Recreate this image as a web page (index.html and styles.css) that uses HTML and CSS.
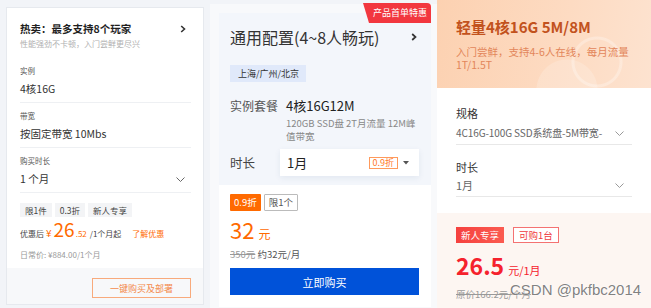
FILE: index.html
```html
<!DOCTYPE html>
<html lang="zh">
<head>
<meta charset="utf-8">
<link rel="stylesheet" href="styles.css">
</head>
<body>
  <div class="card1">
    <div class="c1-body">
      <div class="c1-head">
        <span class="c1-title">热卖：最多支持8个玩家</span>
        <svg class="c1-arrow" width="6" height="8" viewBox="0 0 6 8"><path d="M1.2 1l3.3 3-3.3 3" fill="none" stroke="#333" stroke-width="1.6"/></svg>
      </div>
      <div class="c1-sub">性能强劲不卡顿，入门尝鲜更尽兴</div>
      <div class="field first">
        <div class="f-label">实例</div>
        <div class="f-value">4核16G</div>
      </div>
      <div class="field">
        <div class="f-label">带宽</div>
        <div class="f-value">按固定带宽 10Mbs</div>
      </div>
      <div class="field">
        <div class="f-label">购买时长</div>
        <div class="f-value"><span>1 个月</span><svg class="c1-down" width="9" height="5" viewBox="0 0 9 5"><path d="M0.5 0.5l4 4 4-4" fill="none" stroke="#666" stroke-width="1"/></svg></div>
      </div>
      <div class="c1-tags">
        <span class="c1-tag">限1件</span>
        <span class="c1-tag">0.3折</span>
        <span class="c1-tag">新人专享</span>
      </div>
      <div class="c1-price">
        <span>优惠后</span><span class="yen">¥</span><span class="big">26</span><span class="dec">.52</span><span>/1个月起</span><span class="link">了解优惠</span>
      </div>
      <div class="c1-daily">日常价: ¥884.00/1个月</div>
    </div>
    <div class="c1-foot">
      <div class="c1-btn">一键购买及部署</div>
    </div>
  </div>

  <div class="card2">
    <div class="c2-badge">产品首单特惠</div>
    <div class="c2-top">
      <div class="c2-head">
        <span class="c2-title">通用配置(4~8人畅玩)</span>
        <svg class="c2-arrow" width="6" height="8" viewBox="0 0 6 8"><path d="M1.2 1l3.3 3-3.3 3" fill="none" stroke="#333" stroke-width="1.7"/></svg>
      </div>
      <div class="c2-region">上海/广州/北京</div>
      <div class="c2-row">
        <span class="c2-lbl">实例套餐</span>
        <span class="c2-val">4核16G12M</span>
      </div>
      <div class="c2-spec">120GB SSD盘 2T月流量 12M峰值带宽</div>
      <div class="c2-selrow">
        <span class="c2-lbl2">时长</span>
        <div class="c2-select">
          <span class="c2-selval">1月</span>
          <span class="c2-disc">0.9折</span>
          <svg class="c2-caret" width="6" height="4" viewBox="0 0 6 4"><path d="M0 0h6L3 3.5z" fill="#555"/></svg>
        </div>
      </div>
    </div>
    <div class="c2-bot">
      <div class="c2-tags">
        <span class="c2-tag-fill">0.9折</span>
        <span class="c2-tag-line">限1个</span>
      </div>
      <div class="c2-price">32<small>元</small></div>
      <div class="c2-orig"><s>350元</s> 约32元/月</div>
      <div class="c2-btn">立即购买</div>
    </div>
  </div>

  <div class="card3">
    <div class="c3-head">
      <div class="c3-title">轻量4核16G 5M/8M</div>
      <div class="c3-sub">入门尝鲜，支持4-6人在线，每月流量1T/1.5T</div>
    </div>
    <div class="c3-mid">
      <div class="c3-lbl">规格</div>
      <div class="c3-sel"><span class="c3-selval">4C16G-100G SSD系统盘-5M带宽-</span><svg class="c3-down" width="9" height="5" viewBox="0 0 9 5"><path d="M0.5 0.5l4 4 4-4" fill="none" stroke="#999" stroke-width="1"/></svg></div>
      <div class="c3-lbl c3-lbl2">时长</div>
      <div class="c3-sel c3-sel2"><span>1月</span><svg class="c3-down" width="9" height="5" viewBox="0 0 9 5"><path d="M0.5 0.5l4 4 4-4" fill="none" stroke="#999" stroke-width="1"/></svg></div>
    </div>
    <div class="c3-bot">
      <div class="c3-tags">
        <span class="c3-tag-fill">新人专享</span>
        <span class="c3-tag-line">可购1台</span>
      </div>
      <div class="c3-price"><span class="c3-big">26.5</span><span class="c3-unit">元/1月</span></div>
      <div class="c3-orig"><s>原价166.2元/个月</s></div>
    </div>
    <div class="watermark">CSDN @pkfbc2014</div>
  </div>
</body>
</html>
```
FILE: styles.css
```css
* { box-sizing: border-box; margin: 0; padding: 0; }
body {
  width: 651px;
  height: 308px;
  overflow: hidden;
  background: #f2f4f8;
  font-family: "Noto Sans CJK SC", "Noto Sans", sans-serif;
  color: #333;
  display: flex;
  align-items: flex-start;
}

/* ---------- card 1 ---------- */
.card1 {
  margin: 7px 0 0 6px;
  width: 198px;
  border: 1px solid #e6e9ee;
  background: #fff;
  display: flex;
  flex-direction: column;
  flex-shrink: 0;
}
.c1-body { padding: 12px 12px 7px 13px; }
.c1-head {
  display: flex;
  justify-content: space-between;
  align-items: center;
  height: 18px;
}
.c1-title { font-size: 10.5px; font-weight: 700; line-height: 18px; color: #1f1f1f; }
.c1-arrow { margin-right: 5px; }
.c1-sub { font-size: 8px; line-height: 12px; color: #b0b0b0; }
.field { padding: 6px 0 4px; border-bottom: 1px solid #eef0f3; }
.field.first { margin-top: 8px; }
.f-label { font-size: 7.5px; line-height: 14px; color: #555; }
.f-value {
  margin-top: 2px;
  font-size: 10.5px;
  line-height: 18px;
  color: #333;
  display: flex;
  justify-content: space-between;
  align-items: center;
}
.c1-down { margin-right: 6px; }
.c1-tags { display: flex; gap: 3px; margin-top: 10px; }
.c1-tag {
  height: 14px;
  line-height: 14px;
  padding: 0 5px;
  background: #f3f4f6;
  font-size: 8.5px;
  color: #444;
}
.c1-price {
  margin-top: 2px;
  display: flex;
  align-items: baseline;
  font-size: 8px;
  line-height: 20px;
  color: #444;
}
.c1-price .yen { color: #ff6a00; font-size: 10px; margin: 0 2px 0 2px; }
.c1-price .big { color: #ff6a00; font-size: 19px; }
.c1-price .dec { color: #ff6a00; font-size: 8px; margin: 0 3px 0 1px; }
.c1-price .link { color: #ff6a00; margin-left: 11px; }
.c1-daily { margin-top: 5px; font-size: 8px; line-height: 12px; color: #999; }
.c1-foot {
  background: #f7f8fa;
  padding: 10px 12px 6px;
  display: flex;
  justify-content: flex-end;
}
.c1-btn {
  width: 99px;
  height: 20px;
  border: 1px solid #f8aa7c;
  color: #f48a4c;
  font-size: 9px;
  display: flex;
  align-items: center;
  justify-content: center;
}

/* ---------- card 2 ---------- */
.card2 {
  position: relative;
  margin: 13px 0 0 15px;
  width: 212px;
  flex-shrink: 0;
  background: #fff;
  box-shadow: 0 0 0 9px #f8f9fb;
}
.c2-badge {
  position: absolute;
  top: -10px;
  right: 0;
  width: 68px;
  height: 20px;
  padding-left: 10px;
  background: #f2373f;
  color: #fff;
  font-size: 9px;
  line-height: 20px;
  border-top-right-radius: 4px;
  clip-path: polygon(0 0, 100% 0, 100% 100%, 6px 100%);
}
.c2-top { background: #f3f6fb; padding: 13px 12px 9px 11px; }
.c2-head {
  display: flex;
  justify-content: space-between;
  align-items: center;
  height: 22px;
}
.c2-title { font-size: 16px; line-height: 22px; color: #333; }
.c2-arrow { margin-right: 2px; }
.c2-region {
  margin-top: 17px;
  width: fit-content;
  height: 17px;
  line-height: 17px;
  padding: 0 7px 0 8px;
  background: #e0e9fa;
  font-size: 9px;
  color: #333;
}
.c2-row { display: flex; margin-top: 15px; }
.c2-lbl { width: 56px; font-size: 12px; line-height: 18px; color: #555; }
.c2-val { font-size: 13px; line-height: 18px; color: #222; }
.c2-spec {
  margin: 2px 0 0 56px;
  width: 133px;
  font-size: 9.5px;
  line-height: 13px;
  color: #888;
}
.c2-selrow { display: flex; align-items: center; margin-top: 6px; }
.c2-lbl2 { width: 50px; font-size: 12.5px; color: #444; }
.c2-select {
  width: 139px;
  height: 27px;
  background: #fff;
  box-shadow: 0 2px 6px rgba(30, 60, 120, 0.08);
  display: flex;
  align-items: center;
  padding: 0 10px 0 7px;
}
.c2-selval { font-size: 13px; color: #222; }
.c2-disc {
  margin-left: auto;
  height: 12px;
  line-height: 10px;
  padding: 0 3px;
  border: 1px solid #ff9a5c;
  color: #ff7a2a;
  font-size: 9px;
}
.c2-caret { margin-left: 5px; }
.c2-bot { padding: 9px 12px 12px 11px; }
.c2-tags { display: flex; gap: 3px; }
.c2-tag-fill {
  height: 17px;
  line-height: 17px;
  padding: 0 4px;
  background: #ff6a00;
  color: #fff;
  font-size: 9.5px;
  border-radius: 1px;
}
.c2-tag-line {
  height: 17px;
  line-height: 15px;
  padding: 0 4px;
  border: 1px solid #bbb;
  border-radius: 1px;
  color: #555;
  font-size: 9.5px;
}
.c2-price { margin-top: 5px; font-size: 22px; line-height: 26px; color: #ff6a00; }
.c2-price small { font-size: 12px; margin-left: 4px; }
.c2-orig { font-size: 9.5px; line-height: 14px; color: #555; }
.c2-orig s { color: #999; }
.c2-btn {
  margin-top: 7px;
  height: 27px;
  background: #0052d9;
  color: #fff;
  font-size: 11px;
  display: flex;
  align-items: center;
  justify-content: center;
}

/* ---------- card 3 ---------- */
.card3 {
  position: relative;
  margin-left: 6px;
  width: 230px;
  height: 308px;
  flex-shrink: 0;
  background: #fff;
  display: flex;
  flex-direction: column;
}
.c3-head {
  height: 88px;
  padding: 16px 19px 0;
  background:
    radial-gradient(circle at 160px 62px, transparent 22px, rgba(255,255,255,0.28) 23px, rgba(255,255,255,0.28) 25px, transparent 26px),
    radial-gradient(circle at 130px 90px, rgba(255,255,255,0.18) 0, rgba(255,255,255,0.18) 30px, transparent 31px),
    linear-gradient(100deg, #fcd1b1 0%, #fddbc2 55%, #fde4d2 100%);
}
.c3-title { font-size: 15px; font-weight: 700; line-height: 22px; color: #c2521d; }
.c3-sub {
  margin-top: 8px;
  width: 180px;
  font-size: 10.5px;
  line-height: 12.5px;
  color: #e3865a;
}
.c3-mid { padding: 16px 19px 16px; }
.c3-lbl { font-size: 11px; line-height: 18px; color: #333; }
.c3-lbl2 { margin-top: 13px; }
.c3-sel {
  width: 176px;
  margin-top: 3px;
  padding-bottom: 3px;
  border-bottom: 1px solid #e8e8e8;
  display: flex;
  justify-content: space-between;
  align-items: center;
  font-size: 11px;
  line-height: 16px;
  color: #666;
}
.c3-sel2 { margin-top: 1px; }
.c3-selval { white-space: nowrap; font-size: 10px; letter-spacing: -0.1px; }
.c3-down { margin-right: 8px; flex-shrink: 0; }
.c3-bot { flex: 1; background: #fdf6f2; padding: 14px 19px 0; }
.c3-tags { display: flex; gap: 9px; }
.c3-tag-fill {
  height: 16px;
  line-height: 16px;
  padding: 0 5px;
  background: linear-gradient(90deg, #f5413f, #fb5b50);
  color: #fff;
  font-size: 9.5px;
}
.c3-tag-line {
  height: 16px;
  line-height: 14px;
  padding: 0 5px;
  border: 1px solid #f47272;
  color: #ef3b3d;
  font-size: 9.5px;
  background: #fff;
}
.c3-price { margin-top: 8px; display: flex; align-items: baseline; line-height: 28px; color: #f5222d; }
.c3-big { font-size: 23px; font-weight: 700; }
.c3-unit { font-size: 11px; margin-left: 4px; }
.c3-orig { margin-top: 3px; font-size: 9.5px; line-height: 14px; color: #999; }
.watermark {
  position: absolute;
  left: 73px;
  top: 281px;
  font-family: "Liberation Sans", Arial, sans-serif;
  font-size: 15px;
  line-height: 18px;
  color: rgba(95, 95, 95, 0.8);
  text-shadow: 0 0 2px #fff, 0 0 1px #fff;
  white-space: nowrap;
}
```
